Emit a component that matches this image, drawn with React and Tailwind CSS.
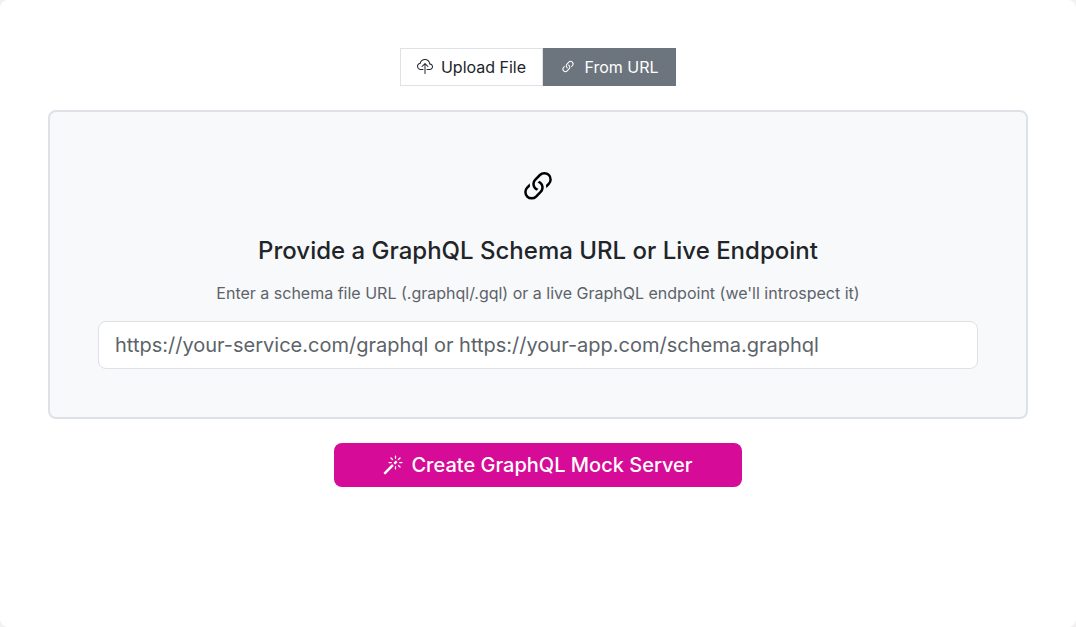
import { BsCloudUpload, BsLink45Deg, BsMagic } from "react-icons/bs";

export default function App() {
  return (
    <div className="h-[627px] w-[1076px] overflow-hidden bg-[#f3f0f2] font-['Inter',sans-serif]">
      <div className="flex h-full flex-col items-center rounded-lg bg-white p-12">
        {/* Source switch */}
        <div className="mb-6 flex h-[38px]">
          <button
            type="button"
            className="flex w-[143px] items-center justify-center gap-2 border border-[#dee2e6] bg-white text-base text-[#212529]"
          >
            <BsCloudUpload size={16} />
            Upload File
          </button>
          <button
            type="button"
            className="flex w-[133px] items-center justify-center gap-2 bg-[#6c757d] text-base text-white"
          >
            <BsLink45Deg size={16} />
            From URL
          </button>
        </div>

        <div className="flex h-[309px] w-full flex-col items-center rounded-lg border-2 border-[#dee2e6] bg-[#f8f9fa] px-12 pt-[55px]">
          <BsLink45Deg size={40} className="text-black" />
          <h5 className="mt-[29px] text-2xl leading-[29px] font-medium text-[#212529]">
            Provide a GraphQL Schema URL or Live Endpoint
          </h5>
          <p className="mt-4 text-base leading-6 text-[#5c636a]">
            Enter a schema file URL (.graphql/.gql) or a live GraphQL endpoint (we'll introspect it)
          </p>
          <input
            type="text"
            placeholder="https://your-service.com/graphql or https://your-app.com/schema.graphql"
            className="mt-4 h-12 w-full rounded-lg border border-[#dee2e6] bg-white px-4 text-xl text-[#212529] outline-none placeholder:text-[#5c636a]"
          />
        </div>

        <button
          type="button"
          className="mt-6 flex h-11 w-[408px] items-center justify-center gap-2 rounded-lg bg-[#d60b97] text-xl font-medium text-white"
        >
          <BsMagic size={20} />
          Create GraphQL Mock Server
        </button>
      </div>
    </div>
  );
}
